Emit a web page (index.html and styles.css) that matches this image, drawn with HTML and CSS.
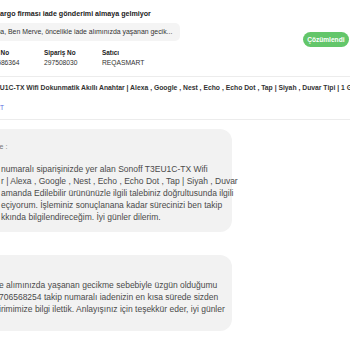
FILE: index.html
```html
<!DOCTYPE html>
<html lang="tr">
<head>
    <meta charset="UTF-8">
    <meta name="viewport" content="width=device-width, initial-scale=1.0">
    <title>Talep Detayı</title>
    <link rel="stylesheet" href="styles.css">
</head>
<body>

    <div class="page">
        <header class="ticket-head">
            <div class="ticket-main">
                <h1 class="ticket-title">Kargo firması iade gönderimi almaya gelmiyor</h1>
                <p class="ticket-preview">Merhaba, Ben Merve, öncelikle iade alımınızda yaşanan gecik...</p>
            </div>
            <span class="status">Çözümlendi</span>
        </header>

        <div class="ticket-info">
            <span class="info-label">İade No</span>
            <span class="info-label">Sipariş No</span>
            <span class="info-label">Satıcı</span>
            <span class="info-value">170586364</span>
            <span class="info-value">297508030</span>
            <span class="info-value">REQASMART</span>
        </div>

        <div class="product">
            <p class="product-name">Sonoff T3EU1C-TX Wifi Dokunmatik Akıllı Anahtar | Alexa , Google , Nest , Echo , Echo Dot , Tap | Siyah , Duvar Tipi | 1 Gang</p>
            <a class="product-seller" href="#">REQASMART</a>
        </div>

        <section class="chat">
            <div class="bubble">
                <div class="bubble-head">Merve :</div>
                <p class="bubble-text">numaralı siparişinizde yer alan Sonoff T3EU1C-TX Wifi<br>r | Alexa , Google , Nest , Echo , Echo Dot , Tap | Siyah , Duvar<br>amanda Edilebilir ürününüzle ilgili talebiniz doğrultusunda ilgili<br>eçiyorum. İşleminiz sonuçlanana kadar sürecinizi ben takip<br>kkında bilgilendireceğim. İyi günler dilerim.</p>
            </div>
            <div class="bubble bubble-last">
                <p class="bubble-text">e alımınızda yaşanan gecikme sebebiyle üzgün olduğumu<br>706568254 takip numaralı iadenizin en kısa sürede sizden<br>irimimize bilgi ilettik. Anlayışınız için teşekkür eder, iyi günler</p>
            </div>
        </section>
    </div>

</body>
</html>
```

FILE: styles.css
```css
* {
    box-sizing: border-box;
}

body {
    margin: 0;
    font-family: "Liberation Sans", Arial, sans-serif;
    background: #ffffff;
    color: #333;
    overflow: hidden;
}

.page {
    width: 350px;
    height: 350px;
    overflow: hidden;
    padding-top: 8px;
}

.ticket-head {
    display: flex;
    justify-content: space-between;
    align-items: flex-start;
}

.ticket-title {
    margin: 0 0 0 -5px;
    font-size: 7.1px;
    line-height: 12px;
    font-weight: bold;
    color: #222;
    white-space: nowrap;
}

.ticket-preview {
    display: inline-block;
    margin: 3px 0 0 -31px;
    padding: 0 8px;
    height: 18px;
    line-height: 18px;
    font-size: 6.9px;
    color: #333;
    background: #f4f4f4;
    border-radius: 5px;
    white-space: nowrap;
}

.status {
    margin: 24px 1px -6px 0;
    padding: 0 4.5px;
    height: 15px;
    line-height: 15px;
    font-size: 6.6px;
    font-weight: bold;
    color: #fff;
    background: #63c66a;
    border-radius: 8px;
    white-space: nowrap;
}

.ticket-info {
    display: grid;
    grid-template-columns: 58px 58px auto;
    margin: 7px 0 0 -14px;
    padding-bottom: 8px;
    border-bottom: 1px solid #ececec;
}

.info-label {
    font-size: 6.4px;
    line-height: 10px;
    font-weight: bold;
    color: #222;
}

.info-value {
    font-size: 6.7px;
    line-height: 10px;
    color: #333;
}

.product {
    margin-left: -36px;
    padding: 6px 0;
    border-bottom: 1px solid #ececec;
}

.product-name {
    margin: 0;
    font-size: 6.8px;
    line-height: 10px;
    font-weight: bold;
    color: #333;
    white-space: nowrap;
}

.product-seller {
    display: block;
    margin: 10px 0 0 -1px;
    font-size: 6.5px;
    line-height: 10px;
    color: #5a6be0;
    text-decoration: none;
}

.chat {
    margin-top: 9px;
}

.bubble {
    width: 246px;
    margin-left: -14px;
    padding: 12px 12px 9px 15px;
    background: #f2f2f2;
    border-radius: 12px;
}

.bubble-last {
    margin-top: 23px;
    padding: 24px 12px 16px 13px;
}

.bubble-head {
    margin: 0 0 10px -17px;
    font-size: 7px;
    line-height: 12px;
    color: #777;
}

.bubble-text {
    margin: 0;
    font-size: 8.5px;
    line-height: 12px;
    color: #4a4a4a;
    white-space: nowrap;
}
```
